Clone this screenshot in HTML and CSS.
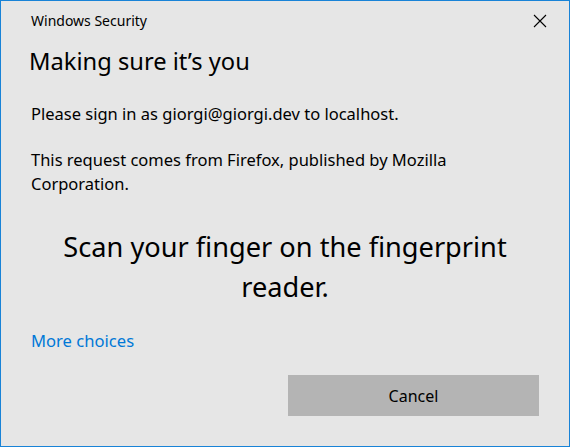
FILE: index.html
```html
<!DOCTYPE html>
<html>
<head>
<meta charset="utf-8">
<link rel="stylesheet" href="styles.css">
</head>
<body>
<div class="dialog">
  <div class="titlebar">
    <span class="app">Windows Security</span>
    <span class="close"><svg width="14" height="14" viewBox="0 0 14 14"><path d="M1 1L13 13M13 1L1 13" stroke="#000" stroke-width="1.1" fill="none"/></svg></span>
  </div>
  <h1 class="heading">Making sure it’s you</h1>
  <p class="msg first">Please sign in as giorgi@giorgi.dev to localhost.</p>
  <p class="msg">This request comes from Firefox, published by Mozilla Corporation.</p>
  <p class="prompt">Scan your finger on the fingerprint reader.</p>
  <a class="more">More choices</a>
  <div class="actions"><button class="cancel">Cancel</button></div>
</div>
</body>
</html>
```
FILE: styles.css
```css
html, body { margin: 0; padding: 0; }
body { width: 570px; height: 447px; font-family: "Noto Sans", "Open Sans", sans-serif; color: #000; }
.dialog { box-sizing: border-box; width: 570px; height: 447px; border: 1px solid #1883d7; background: #e6e6e6; padding: 0 30px; display: flex; flex-direction: column; }
.titlebar { display: flex; justify-content: space-between; align-items: center; height: 39px; }
.app { font-size: 14px; }
.close { width: 14px; height: 14px; margin-right: -8px; display: flex; }
.heading { margin: 1px 0 0 -2px; font-weight: normal; font-size: 23.7px; line-height: 40px; }
.msg { margin: 0; font-size: 16.5px; line-height: 24px; }
.msg.first { margin-top: 21px; margin-bottom: 22px; }
.prompt { margin: 31px 0 0; text-align: center; font-size: 27.2px; line-height: 40px; padding: 0 20px; }
.more { margin-top: 22px; font-size: 16.6px; line-height: 24px; color: #0078d7; }
.actions { display: flex; justify-content: flex-end; margin-top: 22px; }
.cancel { width: 251px; height: 41px; border: none; background: #b4b4b4; font-family: inherit; font-size: 16px; color: #000; padding: 0; }
```
